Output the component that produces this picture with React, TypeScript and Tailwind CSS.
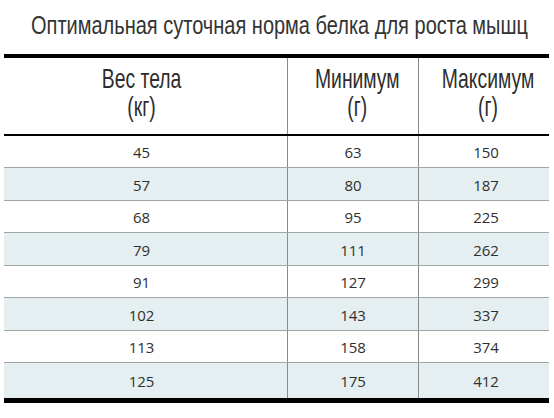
const rows = [
  [45, 63, 150],
  [57, 80, 187],
  [68, 95, 225],
  [79, 111, 262],
  [91, 127, 299],
  [102, 143, 337],
  [113, 158, 374],
  [125, 175, 412],
];

const sans = "font-['Liberation_Sans',Arial,sans-serif]";

// condensed look: Liberation Sans squeezed horizontally
function Head({ top, bottom }: { top: string; bottom: string }) {
  return (
    <span className="inline-block scale-x-[0.69] origin-center whitespace-nowrap">
      {top}
      <br />
      {bottom}
    </span>
  );
}

export default function App() {
  return (
    <div className="w-[554px] h-[418px] bg-white overflow-hidden">
      {/* Title */}
      <div className="pt-[10px] pl-[31px] h-[40px]">
        <h1
          className={`${sans} inline-block origin-left scale-x-[0.8] text-[25px] leading-[30px] text-[#333] whitespace-nowrap`}
        >
          Оптимальная суточная норма белка для роста мышц
        </h1>
      </div>

      {/* Table */}
      <div className="mt-[14px] ml-[4px] w-[545px] border-t-4 border-b-[5px] border-black">
        <div
          className={`${sans} grid grid-cols-[283px_131px_131px] h-[78px] border-b-2 border-black text-[#2d2d2d] text-[28px] leading-[28.5px]`}
        >
          <div className="flex items-center justify-center text-center pb-[6px] pr-[8px]">
            <Head top="Вес тела" bottom="(кг)" />
          </div>
          <div className="flex items-center justify-center text-center pb-[6px] pl-[8px] border-l border-[#8a8a8a]">
            <Head top="Минимум" bottom="(г)" />
          </div>
          <div className="flex items-center justify-center text-center pb-[6px] pl-[8px] border-l border-[#8a8a8a]">
            <Head top="Максимум" bottom="(г)" />
          </div>
        </div>

        {rows.map((r, i) => (
          <div
            key={r[0]}
            className={`grid grid-cols-[283px_131px_131px] font-['Open_Sans',sans-serif] text-[15px] text-[#2f2f2f] ${
              i > 0 ? "border-t border-[#9ea6a6]" : ""
            } ${i % 2 === 1 ? "bg-[#e5eff1]" : "bg-white"} ${
              i === rows.length - 1 ? "h-[36px]" : i === 0 ? "h-[31px]" : "h-[32.5px]"
            }`}
          >
            <div className="flex items-center justify-center pt-[2px] pr-[8px]">{r[0]}</div>
            <div className="flex items-center justify-center pt-[2px] border-l border-[#8a8a8a]">{r[1]}</div>
            <div className="flex items-center justify-center pt-[2px] pl-[4px] border-l border-[#8a8a8a]">
              {r[2]}
            </div>
          </div>
        ))}
      </div>
    </div>
  );
}
